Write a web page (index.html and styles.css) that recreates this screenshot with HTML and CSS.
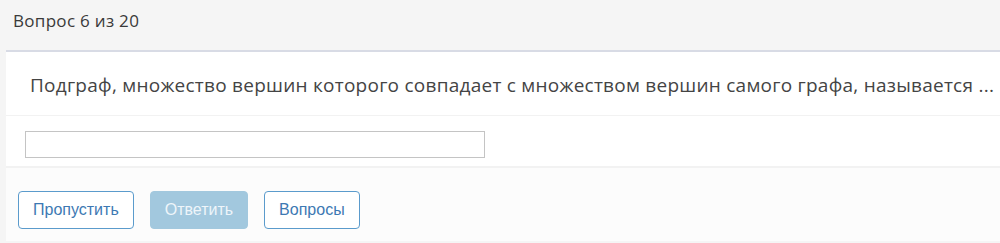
FILE: index.html
```html
<!DOCTYPE html>
<html lang="ru">
<head>
    <meta charset="UTF-8">
    <title>Вопрос 6 из 20</title>
    <link rel="stylesheet" href="styles.css">
</head>
<body>
    <div class="test-header">Вопрос 6 из 20</div>
    <div class="question-panel">
        <div class="question-text">Подграф, множество вершин которого совпадает с множеством вершин самого графа, называется ...</div>
        <div class="question-answer">
            <input type="text" class="answer-input">
        </div>
        <div class="question-buttons">
            <button class="btn btn-outline">Пропустить</button>
            <button class="btn btn-primary" disabled>Ответить</button>
            <button class="btn btn-outline">Вопросы</button>
        </div>
    </div>
</body>
</html>
```
FILE: styles.css
```css
body {
    margin: 0;
    padding: 0;
    background: #f5f5f5;
    font-family: "Open Sans", "Lato", sans-serif;
    color: #333;
}
.test-header {
    height: 50px;
    box-sizing: border-box;
    padding: 10px 13px 0;
    font-size: 17px;
    letter-spacing: 0.3px;
    line-height: 22px;
    color: #3a3a3a;
}
.question-panel {
    margin-left: 6px;
    background: #fff;
    border-top: 2px solid #d8dbe5;
}
.question-text {
    height: 64px;
    box-sizing: border-box;
    padding: 21px 24px 0;
    font-size: 19px;
    letter-spacing: 0.25px;
    line-height: 24px;
    color: #444;
    white-space: nowrap;
    border-bottom: 1px solid #f2f2f2;
}
.question-answer {
    height: 52px;
    box-sizing: border-box;
    padding: 15px 19px 0;
    border-bottom: 2px solid #f2f2f2;
}
.answer-input {
    display: block;
    width: 460px;
    height: 27px;
    box-sizing: border-box;
    margin: 0;
    border: 1px solid #c4c4c4;
    background: #fff;
}
.question-buttons {
    display: flex;
    gap: 16px;
    padding: 23px 12px 12px;
    background: #fcfcfc;
    height: 73px;
    box-sizing: border-box;
}
.btn {
    height: 38px;
    padding: 0 14px;
    font-family: "Liberation Sans", Arial, sans-serif;
    font-size: 16px;
    border-radius: 4px;
    cursor: pointer;
}
.btn-outline {
    background: #fff;
    border: 1px solid #5b9bcc;
    color: #3d79b3;
}
.btn-primary {
    background: #a2c8de;
    border: 1px solid #a2c8de;
    color: #eef5fa;
    cursor: default;
}
```
